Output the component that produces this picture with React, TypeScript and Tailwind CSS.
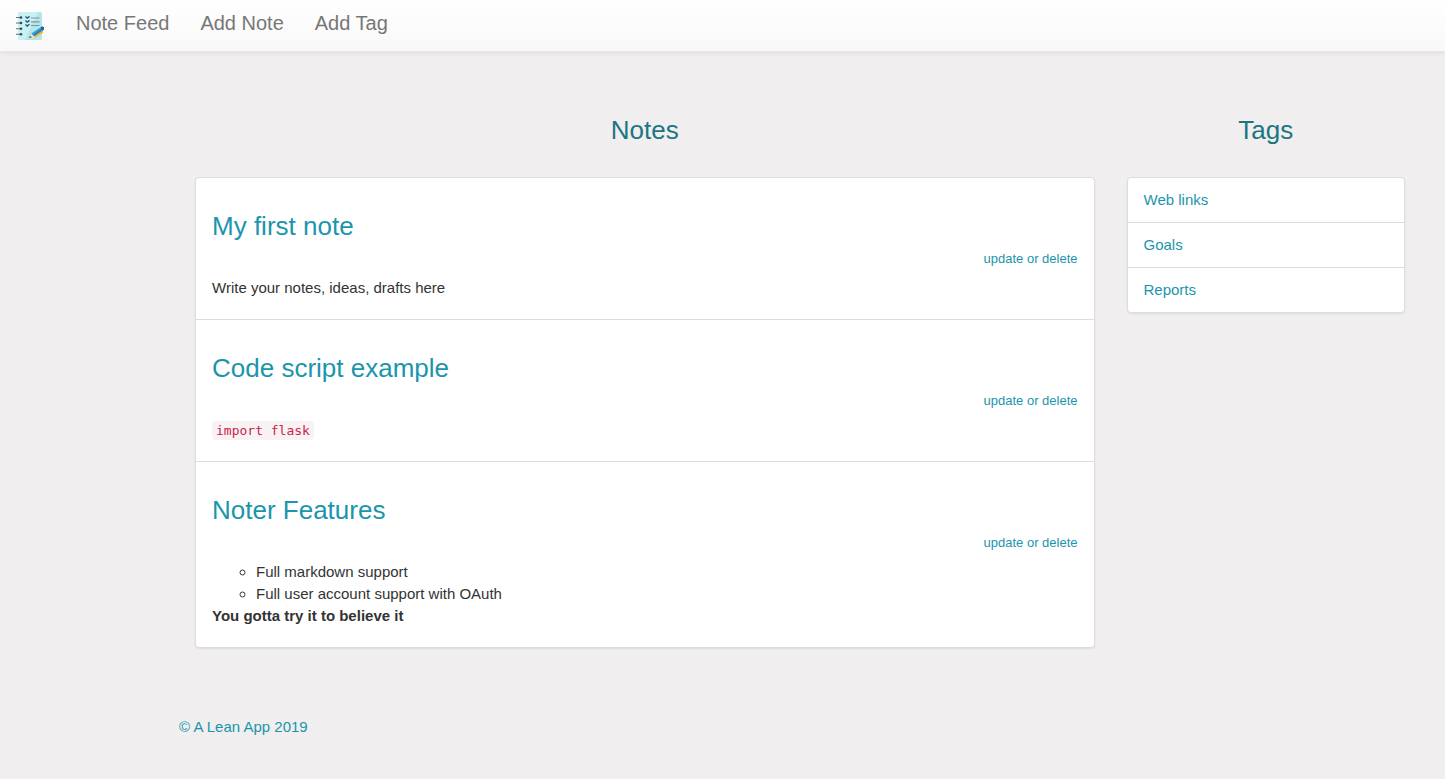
import type { ReactNode } from 'react'

interface Note {
    title: string
    body: ReactNode
}

const navLinks = ['Note Feed', 'Add Note', 'Add Tag']

const tags = ['Web links', 'Goals', 'Reports']

const notes: Note[] = [
    {
        title: 'My first note',
        body: <p>Write your notes, ideas, drafts here</p>,
    },
    {
        title: 'Code script example',
        body: (
            <p>
                <code className="rounded bg-[#f9f2f4] px-1 py-0.5 font-['DejaVu_Sans_Mono',monospace] text-[13px] leading-none text-[#c7254e]">
                    import flask
                </code>
            </p>
        ),
    },
    {
        title: 'Noter Features',
        body: (
            <>
                <ul className="list-[circle] pl-11">
                    <li>Full markdown support</li>
                    <li>Full user account support with OAuth</li>
                </ul>
                <p>
                    <strong>You gotta try it to believe it</strong>
                </p>
            </>
        ),
    },
]

function Logo() {
    return (
        <svg width="28" height="28" viewBox="0 0 28 28" aria-hidden="true">
            <rect x="2" y="0" width="24" height="28" rx="1.5" fill="#b3e6ea" />
            <path d="M3.5 0H22L9 28H3.5A1.5 1.5 0 0 1 2 26.5v-25A1.5 1.5 0 0 1 3.5 0z" fill="#c9f0f2" />
            {/* spiral rings */}
            <path d="M0 5.5h5M0 11h5M0 16.8h5M0 22.3h5" stroke="#5f6f7a" strokeWidth="1.1" />
            <g fill="#33475b">
                <circle cx="5" cy="5.5" r="1.3" />
                <circle cx="5" cy="11" r="1.3" />
                <circle cx="5" cy="16.8" r="1.3" />
                <circle cx="5" cy="22.3" r="1.3" />
            </g>
            {/* check list */}
            <path
                d="M9.5 4.6l1.7 1.6 2.3-1.8M9.5 8.6l1.7 1.6 2.3-1.8M9.5 12.4l1.7 1.6 2.3-1.8"
                fill="none"
                stroke="#24577a"
                strokeWidth="1.4"
            />
            <path d="M15 6h8.5M15 9.8h8.5M15 13.5h8.5" stroke="#7f959b" strokeWidth="1.2" />
            {/* pencil */}
            <path d="M12.8 25.9l2.8-4.4 3.4 3.9z" fill="#e9dcc4" />
            <path d="M12.8 25.9l1.3-2.1 1.8 1.6z" fill="#526270" />
            <path d="M17.8 23.5l9.2-6v3.2l-7.8 5.1z" fill="#f9b233" />
            <path d="M15.5 21.5L26.2 14.5l1.8.8v2.3l-9.8 6.6z" fill="#1f86c0" />
            <path d="M15.5 21.5L26.2 14.5l.9.4-10.4 7.5z" fill="#47a5d8" />
            <path d="M24.4 15.7l1.8-1.2 1.8.8v2.3l-1.4 1z" fill="#176a9c" />
        </svg>
    )
}

function NavBar() {
    return (
        <nav className="flex h-[52px] items-start border-b border-[#e7e7e7] bg-linear-to-b from-white to-[#f8f8f8] px-4 pt-3 shadow-[0_1px_5px_rgba(0,0,0,0.075)]">
            <a href="#" aria-label="Home">
                <Logo />
            </a>
            <ul className="ml-8 flex gap-[31px] text-xl leading-[22px] text-[#777777]">
                {navLinks.map((label) => (
                    <li key={label}>
                        <a href="#">{label}</a>
                    </li>
                ))}
            </ul>
        </nav>
    )
}

function SectionTitle({ children }: { children: ReactNode }) {
    return (
        <h2 className="mb-[22px] border-b border-[#eeeeee] pb-[10px] text-center text-[26px] leading-7 text-[#1c7682]">
            {children}
        </h2>
    )
}

function NoteItem({ note }: { note: Note }) {
    return (
        <li className="px-4 pt-[34px] pb-5">
            <h3 className="text-[26px] leading-7">
                <a href="#" className="text-[#1b95ad]">
                    {note.title}
                </a>
            </h3>
            <div className="mt-2 mb-[7px] text-right text-[13px] leading-[22px]">
                <a href="#" className="text-[#1b95ad]">
                    update or delete
                </a>
            </div>
            {note.body}
        </li>
    )
}

export default function App() {
    return (
        <div className="min-h-screen bg-[#f0eeef] font-['Liberation_Sans',sans-serif] text-[15px] leading-[22px] text-[#333333]">
            <NavBar />
            <div className="mr-6 ml-[179px]">
                <main className="grid grid-cols-12 items-start gap-8 px-4 pt-16">
                    <section className="col-span-9">
                        <SectionTitle>Notes</SectionTitle>
                        <ul className="divide-y divide-[#dddddd] rounded border border-[#dddddd] bg-white shadow-[0_1px_2px_rgba(0,0,0,0.075)]">
                            {notes.map((note) => (
                                <NoteItem key={note.title} note={note} />
                            ))}
                        </ul>
                    </section>
                    <section className="col-span-3">
                        <SectionTitle>Tags</SectionTitle>
                        <ul className="divide-y divide-[#dddddd] rounded border border-[#dddddd] bg-white shadow-[0_1px_2px_rgba(0,0,0,0.075)]">
                            {tags.map((tag) => (
                                <li key={tag}>
                                    <a href="#" className="block px-4 py-[11px] text-[#1b95ad]">
                                        {tag}
                                    </a>
                                </li>
                            ))}
                        </ul>
                    </section>
                </main>
                <footer className="mt-17 pb-8">
                    <a href="#" className="text-[#1b95ad]">
                        © A Lean App 2019
                    </a>
                </footer>
            </div>
        </div>
    )
}
